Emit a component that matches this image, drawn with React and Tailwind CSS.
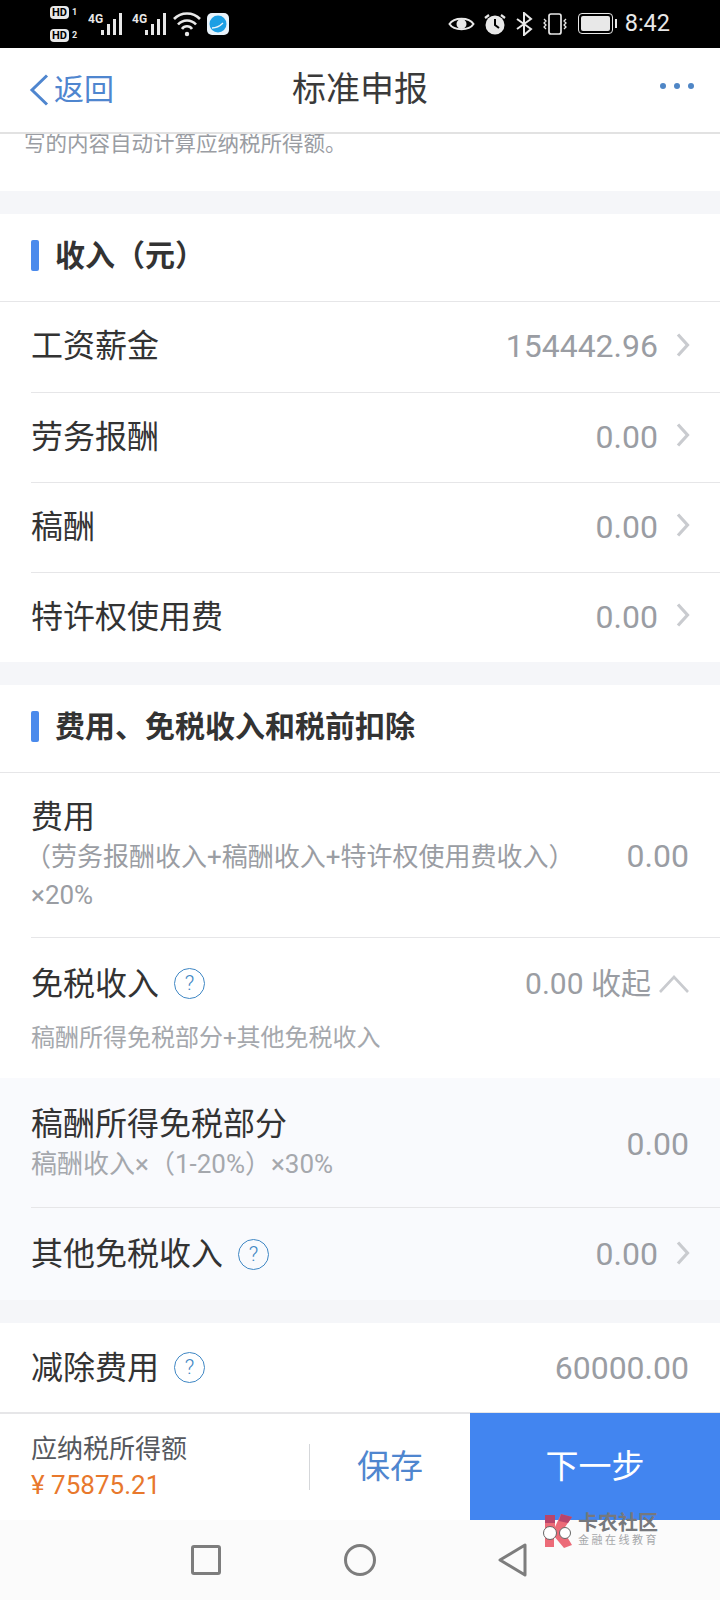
const FONT = "font-['Roboto','Noto_Sans_CJK_SC',sans-serif]";

function Help() {
  return (
    <span className="ml-[15px] flex h-[31px] w-[31px] items-center justify-center rounded-full border-[1.5px] border-[#3f87c4] text-[21px] font-light text-[#3f87c4]">
      ?
    </span>
  );
}

function Arrow() {
  return (
    <svg width="15" height="26" viewBox="0 0 15 26" className="ml-[17px] -mt-[3px]" fill="none" stroke="#c9cbcf" strokeWidth="3.2">
      <path d="M3 2.500L12.500 13L3 23.500" />
    </svg>
  );
}

function Row({ label, value }) {
  return (
    <div className="ml-[31px] flex h-[90px] items-center justify-between border-b border-[#e6e6e8] pb-[1px] pr-[30px] first:h-[91px] last:h-[89px] last:border-b-0">
      <span className="text-[32px] text-[#333333]">{label}</span>
      <div className="flex items-center">
        <span className="text-[32px] text-[#9a9da3]">{value}</span>
        <Arrow />
      </div>
    </div>
  );
}

function SectionTitle({ children }) {
  return (
    <div className="flex h-[88px] items-center border-b border-[#e6e6e8] pb-[3px] pl-[31px]">
      <span className="mr-[16px] h-[31px] w-[8px] rounded-[2px] bg-[#4a8aec]" />
      <span className="text-[30px] font-bold text-[#333333]">{children}</span>
    </div>
  );
}

function StatusBar() {
  return (
    <div className="flex h-[48px] items-center justify-between bg-black pl-[50px] pr-[50px] text-[#e8e8e8]">
      <div className="flex items-center">
        <div className="flex w-[32px] flex-col gap-[10px] text-[11px] font-bold leading-[13px]">
          <span className="flex items-center gap-[3px]">
            <span className="rounded-[4px] bg-[#e8e8e8] px-[2px] text-black">HD</span>
            <span className="text-[9px]">1</span>
          </span>
          <span className="flex items-center gap-[3px]">
            <span className="rounded-[4px] bg-[#e8e8e8] px-[2px] text-black">HD</span>
            <span className="text-[9px]">2</span>
          </span>
        </div>
        <svg width="114" height="30" viewBox="0 0 114 30" className="ml-[6px]" fill="#e8e8e8">
          <text x="0" y="14" fontSize="12" fontWeight="700" fontFamily="Roboto">4G</text>
          <rect x="13" y="21" width="3" height="5" />
          <rect x="19" y="15" width="3" height="11" />
          <rect x="25" y="10" width="3" height="16" />
          <rect x="31" y="4" width="3" height="22" />
          <text x="44" y="14" fontSize="12" fontWeight="700" fontFamily="Roboto">4G</text>
          <rect x="57" y="21" width="3" height="5" />
          <rect x="63" y="15" width="3" height="11" />
          <rect x="69" y="10" width="3" height="16" />
          <rect x="75" y="4" width="3" height="22" />
          <path d="M86 10a18 18 0 0 1 26 0M90 15.500a12 12 0 0 1 18 0M94 20a6 6 0 0 1 10 0" fill="none" stroke="#e8e8e8" strokeWidth="2.600" />
          <circle cx="99" cy="25" r="2.200" />
        </svg>
        <svg width="22" height="22" viewBox="0 0 22 22" className="ml-[5px]">
          <rect width="22" height="22" rx="5" fill="#e9f3fb" />
          <circle cx="11" cy="11" r="8.500" fill="#1c9fe4" />
          <path d="M5 15c4 0 8-2 11-5" stroke="#e9f3fb" strokeWidth="1.300" fill="none" />
        </svg>
      </div>
      <div className="flex items-center">
        <svg width="27" height="20" viewBox="0 0 27 20" fill="none" stroke="#e8e8e8" strokeWidth="2">
          <path d="M1.500 10C6 3 21 3 25.500 10C21 17 6 17 1.500 10Z" />
          <circle cx="13.500" cy="10" r="4" fill="#e8e8e8" />
        </svg>
        <svg width="24" height="24" viewBox="0 0 24 24" className="ml-[8px]">
          <circle cx="12" cy="13" r="9.500" fill="#e8e8e8" />
          <path d="M12 7v6l4 3" stroke="#000" strokeWidth="2" fill="none" />
          <path d="M2 6l4-3M22 6l-4-3" stroke="#e8e8e8" strokeWidth="2.200" />
        </svg>
        <svg width="18" height="24" viewBox="0 0 18 24" className="ml-[8px]" fill="none" stroke="#e8e8e8" strokeWidth="2">
          <path d="M2 7l14 10-7 6V1l7 6L2 17" />
        </svg>
        <svg width="28" height="24" viewBox="0 0 28 24" className="ml-[8px]" fill="none" stroke="#e8e8e8" strokeWidth="1.700">
          <rect x="8" y="2" width="12" height="20" rx="2" />
          <path d="M3 7l2 2-2 2 2 2-2 2 2 2M25 7l-2 2 2 2-2 2 2 2-2 2" strokeWidth="1.300" />
        </svg>
        <div className="ml-[9px] flex items-center">
          <div className="flex h-[21px] w-[35px] rounded-[4px] border-[1.5px] border-[#e8e8e8] p-[2px]">
            <div className="flex-1 rounded-[2px] bg-[#e8e8e8]" />
          </div>
          <div className="ml-[2px] h-[9px] w-[2px] bg-[#e8e8e8]" />
        </div>
        <span className="ml-[8px] text-[23.500px] font-normal leading-none">8:42</span>
      </div>
    </div>
  );
}

export default function App() {
  return (
    <div className={`relative flex h-[1600px] w-[720px] flex-col overflow-hidden bg-white ${FONT}`}>
      <StatusBar />

      {/* Header */}
      <div className="relative flex h-[86px] items-center justify-center border-b-2 border-[#e2e2e2] bg-white">
        <div className="absolute left-[29px] top-[24px] flex items-center text-[#4f86cf]">
          <svg width="20" height="32" viewBox="0 0 20 32" fill="none" stroke="#4f86cf" strokeWidth="3">
            <path d="M18 1.500L3 16L18 30.500" />
          </svg>
          <span className="ml-[5px] text-[30px] leading-[36px]">返回</span>
        </div>
        <span className="text-[34px] text-[#3a3a3a]">标准申报</span>
        <div className="absolute right-[26px] top-[35px] flex gap-[8px]">
          <span className="h-[6px] w-[6px] rounded-full bg-[#4f86c6]" />
          <span className="h-[6px] w-[6px] rounded-full bg-[#4f86c6]" />
          <span className="h-[6px] w-[6px] rounded-full bg-[#4f86c6]" />
        </div>
      </div>

      {/* Scrolled text */}
      <div className="h-[57px] pl-[24px] text-[21.500px] leading-[20px] text-[#9a9da3]">
        写的内容自动计算应纳税所得额。
      </div>
      <div className="h-[23px] bg-[#f5f6f9]" />

      <SectionTitle>收入（元）</SectionTitle>
      <div>
        <Row label="工资薪金" value="154442.96" />
        <Row label="劳务报酬" value="0.00" />
        <Row label="稿酬" value="0.00" />
        <Row label="特许权使用费" value="0.00" />
      </div>
      <div className="h-[23px] bg-[#f5f6f9]" />

      <SectionTitle>费用、免税收入和税前扣除</SectionTitle>

      {/* 费用 */}
      <div className="ml-[31px] flex h-[166px] items-center justify-between border-b border-[#e6e6e8] pr-[31px]">
        <div className="w-[560px]">
          <div className="text-[32px] leading-[42px] text-[#333333]">费用</div>
          <div className="text-[26px] leading-[38px] text-[#9a9da3]">
            <div className="-ml-[6px] whitespace-nowrap">（劳务报酬收入+稿酬收入+特许权使用费收入）</div>
            <div>×20%</div>
          </div>
        </div>
        <span className="pt-[2px] text-[32px] text-[#9a9da3]">0.00</span>
      </div>

      {/* 免税收入 */}
      <div className="h-[140px] pl-[31px] pr-[30px] pt-[23px]">
        <div className="flex items-center justify-between">
          <div className="flex items-center">
            <span className="text-[32px] leading-[44px] text-[#333333]">免税收入</span>
            <Help />
          </div>
          <div className="flex items-center text-[30px] text-[#9a9da3]">
            <span>0.00 收起</span>
            <svg width="32" height="20" viewBox="0 0 32 20" className="ml-[7px]" fill="none" stroke="#c9cbcf" strokeWidth="2.600">
              <path d="M2 18L16 3L30 18" />
            </svg>
          </div>
        </div>
        <div className="mt-[14px] text-[24px] leading-[36px] text-[#a5a8ad]">稿酬所得免税部分+其他免税收入</div>
      </div>

      {/* 展开 */}
      <div className="bg-[#f9fafd]">
        <div className="ml-[31px] flex h-[130px] items-center justify-between border-b border-[#e6e6e8] pr-[31px]">
          <div>
            <div className="text-[32px] leading-[42px] text-[#333333]">稿酬所得免税部分</div>
            <div className="text-[26px] leading-[38px] text-[#a5a8ad]">稿酬收入×（1-20%）×30%</div>
          </div>
          <span className="pt-[2px] text-[32px] text-[#9a9da3]">0.00</span>
        </div>
        <div className="ml-[31px] flex h-[92px] items-center justify-between pr-[30px]">
          <div className="flex items-center">
            <span className="text-[32px] text-[#333333]">其他免税收入</span>
            <Help />
          </div>
          <div className="flex items-center">
            <span className="text-[32px] text-[#9a9da3]">0.00</span>
            <Arrow />
          </div>
        </div>
      </div>
      <div className="h-[23px] bg-[#f5f6f9]" />

      <div className="flex h-[89px] items-center justify-between pl-[31px] pr-[31px]">
        <div className="flex items-center">
          <span className="text-[32px] text-[#333333]">减除费用</span>
          <Help />
        </div>
        <span className="text-[32px] text-[#9a9da3]">60000.00</span>
      </div>

      {/* Bottom bar */}
      <div className="flex h-[108px] border-t-2 border-[#e6e6e8] bg-white">
        <div className="flex w-[309px] flex-col justify-center pl-[31px]">
          <span className="text-[26px] leading-[36px] text-[#55585e]">应纳税所得额</span>
          <span className="text-[26px] leading-[36px] text-[#e8782c]">¥ 75875.21</span>
        </div>
        <div className="mt-[30px] h-[46px] w-px bg-[#d5d7da]" />
        <div className="flex w-[160px] items-center justify-center text-[33px] text-[#4f86cf]">保存</div>
        <div className="-mt-[1px] flex flex-1 items-center justify-center bg-[#4285f0] text-[33px] text-white">下一步</div>
      </div>

      {/* Nav bar */}
      <div className="flex h-[80px] items-center bg-[#fbfbfb] pl-[191px]">
        <span className="h-[30px] w-[30px] rounded-[3px] border-[3px] border-[#7d7d7d]" />
        <span className="ml-[123px] h-[32px] w-[32px] rounded-full border-[3px] border-[#7d7d7d]" />
        <svg width="30" height="34" viewBox="0 0 30 34" className="ml-[122px]" fill="none" stroke="#7d7d7d" strokeWidth="3" strokeLinejoin="round">
          <path d="M27 2V32L2 17Z" />
        </svg>
      </div>

      {/* 水印 */}
      <div className="absolute left-[540px] top-[1513px] flex items-center">
        <svg width="36" height="34" viewBox="0 0 36 34">
          <path d="M5 1h10v12L21 0l11 3-9 13 9 15-8 3-10-12v11H5Z" fill="#ec6b78" />
          <path d="M5 1h10v8H5ZM21 0l11 3-4 6-9-2Z" fill="#b8456b" />
          <circle cx="10" cy="19" r="6.500" fill="#fff" stroke="#666" strokeWidth="1" />
          <circle cx="25" cy="19" r="5.500" fill="#fff" stroke="#666" strokeWidth="1" />
        </svg>
        <div className="ml-[2px] flex flex-col">
          <span className="text-[20px] font-bold leading-[21px] text-[#76787c]">卡农社区</span>
          <span className="text-[11px] leading-[14px] tracking-[2.500px] text-[#a5a7aa]">金融在线教育</span>
        </div>
      </div>
    </div>
  );
}
